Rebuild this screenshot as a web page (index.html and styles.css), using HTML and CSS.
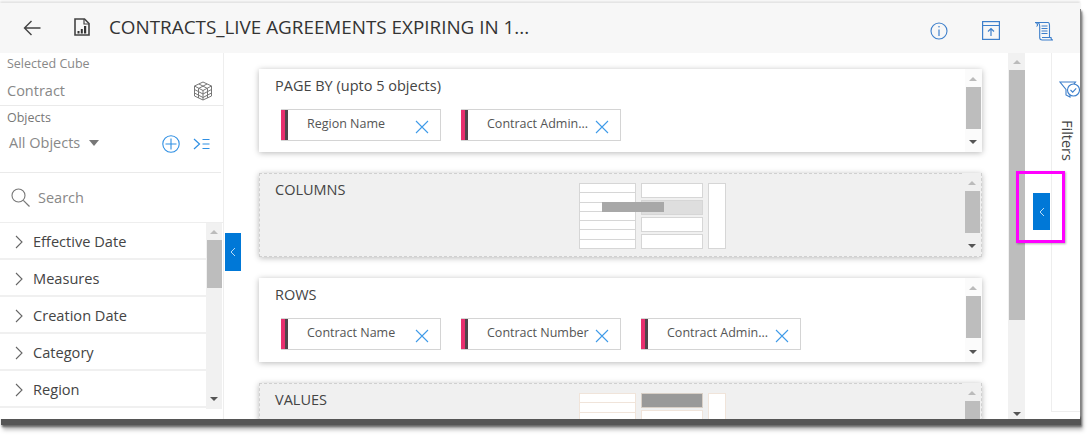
FILE: index.html
```html
<!DOCTYPE html>
<html lang="en">
<head>
<meta charset="utf-8">
<title>Contracts report</title>
<link rel="stylesheet" href="styles.css">
</head>
<body>
<div class="window">
  <header class="topbar">
    <svg class="ic-back" width="18" height="16" viewBox="0 0 18 16"><path d="M17.500 8H1.500M8.500 1L1.500 8l7 7" fill="none" stroke="#444" stroke-width="1.400"/></svg>
    <svg class="ic-report" width="16" height="18" viewBox="0 0 16 18"><path d="M1 1h9.500L15 5.500V17H1z" fill="none" stroke="#444" stroke-width="1.600"/><path d="M10 1v5h5" fill="none" stroke="#444" stroke-width="1.200"/><path d="M3.500 13h2v2.500h-2zM6.800 11h2v4.500h-2zM10 8h2.200v7.500H10z" fill="#333"/></svg>
    <h1 class="title">CONTRACTS_LIVE AGREEMENTS EXPIRING IN 1...</h1>
    <div class="actions">
      <svg width="18" height="18" viewBox="0 0 18 18"><circle cx="9" cy="9" r="8" fill="none" stroke="#3d7fcb" stroke-width="1.100"/><path d="M9 7.500V14" stroke="#3d7fcb" stroke-width="1.200"/><circle cx="9" cy="4.800" r=".8" fill="#3d7fcb"/></svg>
      <svg width="18" height="19" viewBox="0 0 18 19"><rect x=".6" y=".6" width="16.800" height="17.800" fill="none" stroke="#3d7fcb" stroke-width="1.200"/><path d="M.6 4.500h16.800M9 15V8M6 10.500L9 7.500l3 3" fill="none" stroke="#3d7fcb" stroke-width="1.200"/></svg>
      <svg width="20" height="20" viewBox="0 0 20 20"><path d="M1 1.500h13c1.500 0 1.500 1.500 1.500 3V16M1 1.500c1.500 0 2.500 1 2.500 2.500s-1 1-1 1M4 1.500c1.500 1 1.700 2 1.700 3.500V16.500c0 1.500 1 2.500 2.500 2.500H19c-1 0-2-1-2-2.500H8" fill="none" stroke="#3d7fcb" stroke-width="1.100"/><path d="M7.500 5h6M7.500 7.500h6M7.500 10h6M7.500 12.500h6" stroke="#3d7fcb" stroke-width="1.100"/></svg>
    </div>
  </header>

  <div class="workspace">
    <aside class="left">
      <section class="cube">
        <div class="label">Selected Cube</div>
        <div class="cube-row">
          <span class="value">Contract</span>
          <svg width="20" height="20" viewBox="0 0 20 20"><path d="M10 1l8.500 4v10L10 19l-8.500-4V5zM1.500 5L10 9.500 18.500 5M10 9.500V19M6 3L14.500 7.500V17M14 3L5.500 7.500V17M1.500 8.500L10 13l8.500-4.500M1.500 12L10 16.500l8.500-4.500" fill="none" stroke="#777" stroke-width="1"/></svg>
        </div>
      </section>
      <section class="objects">
        <div class="label">Objects</div>
        <div class="objects-row">
          <span class="value">All Objects</span>
          <span class="caret"></span>
          <svg class="ic-plus" width="18" height="18" viewBox="0 0 18 18"><circle cx="9" cy="9" r="8.200" fill="none" stroke="#2f8fe3" stroke-width="1.100"/><path d="M9 3.500v11M3.500 9h11" stroke="#2f8fe3" stroke-width="1.100"/></svg>
          <svg class="ic-expand" width="17" height="12" viewBox="0 0 17 12"><path d="M1 1l5.500 5L1 11" fill="none" stroke="#2f8fe3" stroke-width="1.200"/><path d="M9.500 1.500H16.500M9.500 6H16.500M9.500 10.500H16.500" stroke="#2f8fe3" stroke-width="1.200"/></svg>
        </div>
      </section>
      <section class="search">
        <svg width="19" height="19" viewBox="0 0 19 19"><circle cx="7.500" cy="7.500" r="6.500" fill="none" stroke="#777" stroke-width="1.100"/><path d="M12.300 12.300L18.500 18.500" stroke="#777" stroke-width="1.200"/></svg>
        <span class="value">Search</span>
      </section>
      <div class="tree-wrap">
        <ul class="tree">
          <li><svg class="chev" width="8" height="14" viewBox="0 0 8 14"><path d="M1 1l6 6-6 6" fill="none" stroke="#666" stroke-width="1.100"/></svg>Effective Date</li>
          <li><svg class="chev" width="8" height="14" viewBox="0 0 8 14"><path d="M1 1l6 6-6 6" fill="none" stroke="#666" stroke-width="1.100"/></svg>Measures</li>
          <li><svg class="chev" width="8" height="14" viewBox="0 0 8 14"><path d="M1 1l6 6-6 6" fill="none" stroke="#666" stroke-width="1.100"/></svg>Creation Date</li>
          <li><svg class="chev" width="8" height="14" viewBox="0 0 8 14"><path d="M1 1l6 6-6 6" fill="none" stroke="#666" stroke-width="1.100"/></svg>Category</li>
          <li><svg class="chev" width="8" height="14" viewBox="0 0 8 14"><path d="M1 1l6 6-6 6" fill="none" stroke="#666" stroke-width="1.100"/></svg>Region</li>
        </ul>
        <div class="sb sb-tree"><i class="up"></i><b class="thumb"></b><i class="down"></i></div>
      </div>
      <button class="toggle toggle-left"><svg width="6" height="10" viewBox="0 0 6 10"><path d="M5 1L1 5l4 4" fill="none" stroke="#bcdcf5" stroke-width="1"/></svg></button>
    </aside>

    <main class="center">
      <section class="card">
        <div class="card-body">
          <h2>PAGE BY (upto 5 objects)</h2>
          <div class="chips">
            <div class="chip"><span>Region Name</span><svg width="14" height="14" viewBox="0 0 14 14"><path d="M1 1l12 12M13 1L1 13" stroke="#3f9be8" stroke-width="1.100"/></svg></div>
            <div class="chip"><span>Contract Admin...</span><svg width="14" height="14" viewBox="0 0 14 14"><path d="M1 1l12 12M13 1L1 13" stroke="#3f9be8" stroke-width="1.100"/></svg></div>
          </div>
        </div>
        <div class="sb sb-card"><i class="up"></i><b class="thumb"></b><i class="down"></i></div>
      </section>

      <section class="card drop">
        <div class="card-body">
          <h2>COLUMNS</h2>
          <div class="mini">
            <div class="mini-table"><i></i><i></i><i></i><i></i><i></i><i></i><i></i></div>
            <div class="mini-cells"><i></i><i class="on"></i><i></i><i></i></div>
            <div class="mini-side"></div>
            <div class="drag"></div>
          </div>
        </div>
        <div class="sb sb-card"><i class="up"></i><b class="thumb"></b><i class="down"></i></div>
      </section>

      <section class="card">
        <div class="card-body">
          <h2>ROWS</h2>
          <div class="chips">
            <div class="chip"><span>Contract Name</span><svg width="14" height="14" viewBox="0 0 14 14"><path d="M1 1l12 12M13 1L1 13" stroke="#3f9be8" stroke-width="1.100"/></svg></div>
            <div class="chip"><span>Contract Number</span><svg width="14" height="14" viewBox="0 0 14 14"><path d="M1 1l12 12M13 1L1 13" stroke="#3f9be8" stroke-width="1.100"/></svg></div>
            <div class="chip"><span>Contract Admin...</span><svg width="14" height="14" viewBox="0 0 14 14"><path d="M1 1l12 12M13 1L1 13" stroke="#3f9be8" stroke-width="1.100"/></svg></div>
          </div>
        </div>
        <div class="sb sb-card"><i class="up"></i><b class="thumb"></b><i class="down"></i></div>
      </section>

      <section class="card drop values">
        <div class="card-body">
          <h2>VALUES</h2>
          <div class="mini">
            <div class="mini-table"><i></i><i></i><i></i><i></i><i></i><i></i><i></i></div>
            <div class="mini-cells"><i class="on"></i><i></i><i></i><i></i></div>
            <div class="mini-side"></div>
          </div>
        </div>
        <div class="sb sb-card"><i class="up"></i><b class="thumb"></b><i class="down"></i></div>
      </section>
    </main>

    <div class="sb sb-main"><i class="up"></i><b class="thumb"></b><i class="down"></i></div>

    <aside class="filters-gutter">
      <div class="highlight"></div>
      <button class="toggle toggle-right"><svg width="6" height="10" viewBox="0 0 6 10"><path d="M5 1L1 5l4 4" fill="none" stroke="#bcdcf5" stroke-width="1"/></svg></button>
    </aside>

    <aside class="filters">
      <svg class="ic-funnel" width="21" height="20" viewBox="0 0 21 20"><path d="M1 2h15.500L11 9.500V17L7 15V9.500z" fill="#fff" stroke="#3d7fcb" stroke-width="1.100"/><circle cx="14.500" cy="10" r="6" fill="#fff" stroke="#3d7fcb" stroke-width="1.100"/><path d="M11.500 10l2.200 2.200 3.500-3.800" fill="none" stroke="#3d7fcb" stroke-width="1.100"/></svg>
      <span class="filters-label">Filters</span>
    </aside>
  </div>
</div>
</body>
</html>
```

FILE: styles.css
```css
* { box-sizing: border-box; }
html, body { margin: 0; padding: 0; background: #fff; }
body {
  width: 1090px;
  height: 436px;
  overflow: hidden;
  padding-top: 3px;
  font-family: "Open Sans", "Noto Sans", sans-serif;
  color: #444;
}
.window {
  width: 1080px;
  height: 416px;
  background: #fff;
  display: flex;
  flex-direction: column;
  box-shadow: 0 -2px 2px #e4e4e4, 1px 6px 0 #555, 2px 8px 2px #666, 3px 11px 4px rgba(0,0,0,.25);
}

/* top bar */
.topbar {
  height: 50px;
  flex: none;
  background: #f7f7f7;
  display: flex;
  align-items: center;
  padding-left: 23px;
}
.ic-back { margin-right: 33px; }
.ic-report { margin-right: 19px; margin-top: -3px; }
.title {
  margin: -2px 0 0;
  font-size: 18.85px;
  font-weight: 400;
  color: #333;
  white-space: nowrap;
}
.actions {
  margin-left: auto;
  display: flex;
  align-items: center;
  gap: 34px;
  padding-right: 26px;
  padding-top: 5px;
}

/* layout */
.workspace {
  flex: 1;
  min-height: 0;
  display: flex;
}
.left {
  position: relative;
  width: 224px;
  flex: none;
  border-right: 1px solid #eee;
  display: flex;
  flex-direction: column;
}
.label { font-size: 12.5px; line-height: 16px; color: #888; }
.value { font-size: 14.5px; line-height: 20px; color: #888; }
.cube {
  height: 53px;
  padding: 3px 10px 0 7px;
  border-bottom: 1px solid #eaeaea;
}
.cube-row {
  display: flex;
  justify-content: space-between;
  align-items: center;
  margin-top: 8px;
}
.cube-row svg { margin-top: 1px; }
.objects {
  height: 67px;
  padding: 4px 11px 0 7px;
  margin-right: 2px;
  border-bottom: 1px solid #eaeaea;
}
.objects .label { color: #777; }
.objects-row {
  display: flex;
  align-items: center;
  margin-top: 7px;
  padding-left: 2px;
}
.caret {
  width: 0;
  height: 0;
  margin-left: 9px;
  margin-top: -1px;
  border: 5px solid transparent;
  border-top: 6px solid #777;
  border-bottom: 0;
}
.ic-plus { margin-left: auto; margin-top: 1px; }
.ic-expand { margin-left: 13px; margin-top: 2px; }
.search {
  height: 49px;
  display: flex;
  align-items: center;
  gap: 8px;
  padding-left: 11px;
}
.tree-wrap {
  display: flex;
  height: 187px;
  border-top: 1px solid #eee;
}
.tree {
  list-style: none;
  margin: 0;
  padding: 0;
  flex: 1;
}
.tree li {
  height: 37px;
  display: flex;
  align-items: center;
  padding-left: 15px;
  border-bottom: 2px solid #f0f0f0;
  font-size: 14.6px;
  color: #444;
}
.chev { margin: 3px 10px 0 0; }

/* scrollbars */
.sb { display: flex; flex-direction: column; align-items: center; flex: none; }
.sb i { display: block; width: 0; height: 0; border: 4px solid transparent; flex: none; }
.sb .up { border-top: 0; border-bottom: 4px solid #bbb; }
.sb .down { border-bottom: 0; border-top: 4px solid #555; margin-top: auto; }
.thumb { display: block; background: #bdbdbd; flex: none; }
.sb-tree { width: 16px; background: #f1f1f1; padding: 7px 0 8px; margin-right: 1px; }
.sb-tree .thumb { width: 15px; height: 48px; margin-top: 6px; }
.sb-card { width: 17px; padding: 8px 1px 8px 0; background: #fbfbfb; }
.sb-card .thumb { width: 15px; height: 42px; margin-top: 6px; }
.sb-main { width: 17px; background: #f1f1f1; padding: 7px 0 3px; }
.sb-main .thumb { width: 16px; height: 250px; margin-top: 6px; }

/* toggles */
.toggle {
  position: absolute;
  margin: 0;
  padding: 0;
  border: 0;
  background: #0078d7;
  display: flex;
  align-items: center;
  justify-content: center;
}
.toggle-left { left: 225px; top: 180px; width: 16px; height: 38px; }
.toggle-right { left: 8px; top: 140px; width: 17px; height: 37px; z-index: 2; }

/* center */
.center {
  flex: 1;
  min-width: 0;
  overflow: hidden;
  padding: 16px 26px 0 35px;
  display: flex;
  flex-direction: column;
  gap: 21px;
}
.card {
  flex: none;
  height: 84px;
  display: flex;
  background: #fff;
  box-shadow: 0 1px 6px rgba(0,0,0,.28);
}
.card:first-child { height: 83px; }
.card-body { flex: 1; padding: 7px 0 0 16px; min-width: 0; }
h2 {
  margin: 0;
  font-size: 14.5px;
  font-weight: 400;
  line-height: 20px;
  color: #444;
}
.chips { display: flex; gap: 20px; margin-top: 13px; padding-left: 6px; }
.chip {
  width: 160px;
  height: 32px;
  display: flex;
  align-items: center;
  justify-content: space-between;
  padding: 0 11px 0 26px;
  border: 1px solid #d4d4d4;
  border-left: 0;
  box-shadow: inset 4px 0 0 #e8306f, inset 7px 0 0 #50454b;
  font-size: 12.5px;
  color: #555;
  white-space: nowrap;
}
.chip span { margin-top: -3px; }
.chip svg { flex: none; margin-top: 3px; }

/* drop zones */
.drop {
  background: #f0f0f0;
  border: 1px dashed #d0d0d0;
}
.drop .sb-card { background: #f0f0f0; margin: -1px 0 0; }
.drop .card-body { display: flex; padding: 6px 0 0 15px; }
.drop h2 { width: 304px; flex: none; }
.mini {
  position: relative;
  display: flex;
  gap: 5px;
  height: 66px;
  margin-top: 3px;
}
.mini-table {
  width: 57px;
  display: flex;
  flex-direction: column;
  border: 1px solid #d6d6d6;
  background: #fff;
}
.mini-table i { flex: 1; border-bottom: 1px solid #d6d6d6; }
.mini-table i:last-child { border-bottom: 0; }
.mini-cells {
  width: 62px;
  display: flex;
  flex-direction: column;
  gap: 2px;
}
.mini-cells i { flex: 1; border: 1px solid #d6d6d6; background: #fff; }
.mini-cells .on { background: #dedede; }
.mini-side { width: 18px; border: 1px solid #d6d6d6; background: #fff; }
.drag {
  position: absolute;
  left: 23px;
  top: 19px;
  width: 62px;
  height: 10px;
  background: #a8a8a8;
}
.values .mini-table, .values .mini-table i, .values .mini-cells i, .values .mini-side { border-color: #f0e4da; }
.values .mini-cells .on { background: #999; border-color: #d8cfc6; }

/* filters */
.filters-gutter { position: relative; width: 26px; flex: none; }
.highlight {
  position: absolute;
  left: -9px;
  top: 118px;
  width: 49px;
  height: 72px;
  border: 3px solid #f0f;
  box-shadow: 1px 1px 2px rgba(0,0,0,.3);
  z-index: 1;
}
.filters {
  width: 29px;
  flex: none;
  height: 359px;
  border-left: 1px solid #eee;
  border-bottom: 1px solid #eee;
  display: flex;
  flex-direction: column;
  align-items: flex-start;
  overflow: hidden;
  padding: 27px 0 0 7px;
}
.ic-funnel { flex: none; margin-bottom: 20px; }
.filters-label {
  writing-mode: vertical-rl;
  font-size: 14.5px;
  line-height: 16px;
  color: #444;
}
```
